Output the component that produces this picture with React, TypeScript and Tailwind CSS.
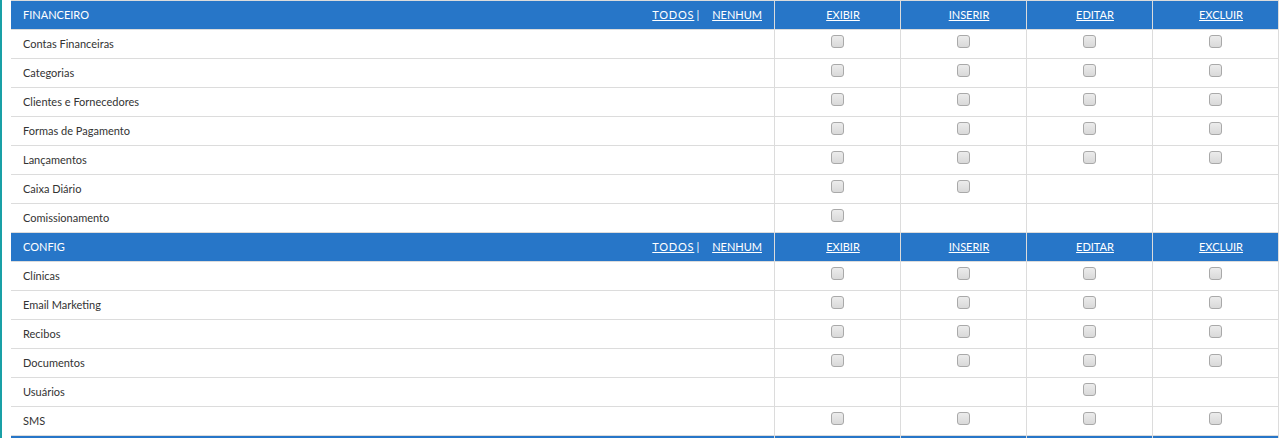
import React from 'react';

type Perm = [boolean, boolean, boolean, boolean];

type Section = {
  title: string;
  rows: { label: string; perms: Perm }[];
};

const ALL: Perm = [true, true, true, true];

const sections: Section[] = [
  {
    title: 'FINANCEIRO',
    rows: [
      { label: 'Contas Financeiras', perms: ALL },
      { label: 'Categorias', perms: ALL },
      { label: 'Clientes e Fornecedores', perms: ALL },
      { label: 'Formas de Pagamento', perms: ALL },
      { label: 'Lançamentos', perms: ALL },
      { label: 'Caixa Diário', perms: [true, true, false, false] },
      { label: 'Comissionamento', perms: [true, false, false, false] },
    ],
  },
  {
    title: 'CONFIG',
    rows: [
      { label: 'Clínicas', perms: ALL },
      { label: 'Email Marketing', perms: ALL },
      { label: 'Recibos', perms: ALL },
      { label: 'Documentos', perms: ALL },
      { label: 'Usuários', perms: [false, false, true, false] },
      { label: 'SMS', perms: ALL },
    ],
  },
];

const actions = ['EXIBIR', 'INSERIR', 'EDITAR', 'EXCLUIR'];

const Check: React.FC = () => (
  <input
    type="checkbox"
    className="appearance-none w-[13px] h-[13px] mt-[5px] -ml-px border border-[#a9a9a9] rounded-[3px] bg-gradient-to-b from-[#ececec] to-[#d9d9d9] cursor-pointer checked:bg-[#2776c8]"
  />
);

const SectionHeader: React.FC<{ title: string }> = ({ title }) => (
  <div className="grid grid-cols-[763px_repeat(4,126px)] h-[29px] bg-[#2776c8] border-b border-[#dcdcdc] text-white text-[11px]">
    <div className="flex items-center justify-between pl-3 pr-3">
      <span>{title}</span>
      <span className="flex items-center">
        <a href="#" className="underline tracking-[0.8px]">TODOS</a>
        <span className="ml-[2px]">|</span>
        <a href="#" className="underline ml-[13px]">NENHUM</a>
      </span>
    </div>
    {actions.map((a) => (
      <div key={a} className="flex items-center justify-center pl-[11px] border-l border-[#dcdcdc]">
        <a href="#" className="underline">{a}</a>
      </div>
    ))}
  </div>
);

const PermRow: React.FC<{ label: string; perms: Perm }> = ({ label, perms }) => (
  <div className="grid grid-cols-[763px_repeat(4,126px)] h-[29px] border-b border-[#dcdcdc] text-[11px] text-[#333]">
    <div className="flex items-center pl-3">{label}</div>
    {perms.map((p, i) => (
      <div key={i} className="flex justify-center border-l border-[#dcdcdc]">
        {p && <Check />}
      </div>
    ))}
  </div>
);

export default function App() {
  return (
    <div
      className="h-[438px] overflow-hidden bg-white border-l-2 border-[#19a0a6] pl-[9px]"
      style={{ fontFamily: 'Lato, "Open Sans", sans-serif' }}
    >
      <div className="w-[1268px] border-t border-r border-[#dcdcdc]">
        {sections.map((s) => (
          <div key={s.title}>
            <SectionHeader title={s.title} />
            {s.rows.map((r) => (
              <PermRow key={r.label} label={r.label} perms={r.perms} />
            ))}
          </div>
        ))}
        <div className="grid grid-cols-[763px_repeat(4,126px)] h-[29px] bg-[#2776c8]">
          <div />
          {actions.map((a) => (
            <div key={a} className="border-l border-[#dcdcdc]" />
          ))}
        </div>
      </div>
    </div>
  );
}
